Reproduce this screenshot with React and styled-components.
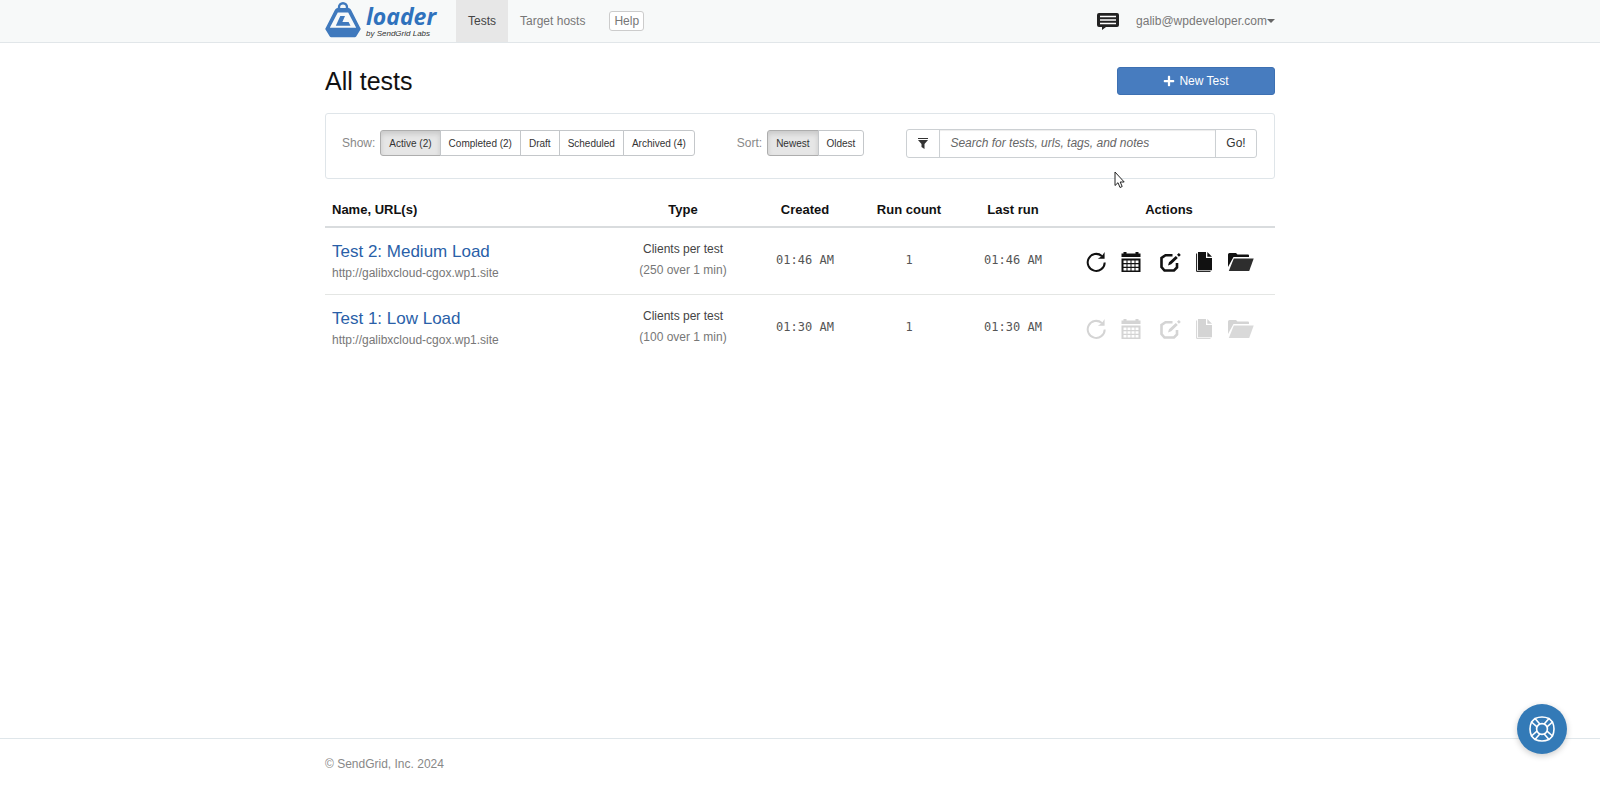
import styled, { createGlobalStyle, css } from 'styled-components';
import { FaPlus } from 'react-icons/fa';

const GlobalStyle = createGlobalStyle`
  * {
    box-sizing: border-box;
  }

  body {
    margin: 0;
    background: #fff;
    color: #333;
    font-family: 'Liberation Sans', Arial, sans-serif;
    font-size: 12px;
    line-height: 20px;
  }

  a {
    color: inherit;
    text-decoration: none;
  }

  button,
  input {
    font-family: inherit;
  }
`;

const Page = styled.div`
  display: flex;
  flex-direction: column;
  min-height: 100vh;
`;

const Container = styled.div`
  width: 100%;
  max-width: 950px;
  margin: 0 auto;
`;

const Navbar = styled.header`
  background: #f7f9f9;
  border-bottom: 1px solid #e1e6e9;
`;

const NavInner = styled(Container)`
  display: flex;
  align-items: stretch;
  height: 42px;
`;

const Logo = styled.a`
  display: flex;
  gap: 5px;
  width: 131px;
  padding-top: 2px;

  svg {
    flex: none;
  }
`;

const LogoText = styled.span`
  display: flex;
  flex-direction: column;
  white-space: nowrap;
`;

const LogoName = styled.span`
  color: #2f72bd;
  font-family: 'Open Sans', sans-serif;
  font-size: 23px;
  font-style: italic;
  font-weight: 700;
  line-height: 28px;
`;

const LogoBy = styled.span`
  color: #333;
  font-size: 8px;
  font-style: italic;
  line-height: 8px;
`;

const NavLinks = styled.nav`
  display: flex;
  align-items: stretch;
`;

const NavLink = styled.a`
  display: flex;
  align-items: center;
  padding: 0 12px;
  color: ${({ $active }) => ($active ? '#444' : '#777')};
  background: ${({ $active }) => ($active ? '#e7e7e7' : 'transparent')};
`;

const HelpButton = styled.button`
  align-self: center;
  height: 20px;
  margin-left: 12px;
  padding: 0 4px;
  border: 1px solid #ccc;
  border-radius: 3px;
  background: #fff;
  color: #777;
  font-size: 12px;
`;

const NavRight = styled.div`
  display: flex;
  align-items: center;
  gap: 17px;
  margin-left: auto;
  color: #777;
`;

const IconButton = styled.button`
  display: flex;
  padding: 0;
  border: 0;
  background: none;
  color: #222;
`;

const UserMenu = styled.button`
  display: flex;
  align-items: center;
  padding: 0;
  border: 0;
  background: none;
  color: #777;
  font-size: 12px;

  &::after {
    content: '';
    border-top: 4px solid #666;
    border-right: 4px solid transparent;
    border-left: 4px solid transparent;
  }
`;

const Main = styled(Container).attrs({ as: 'main' })`
  flex: 1;
`;

const TitleRow = styled.div`
  display: flex;
  align-items: center;
  justify-content: space-between;
  padding: 24px 0 18px;
`;

const Title = styled.h1`
  margin: 0;
  color: #111;
  font-size: 25px;
  font-weight: 400;
  line-height: 28px;
`;

const NewTestButton = styled.button`
  display: flex;
  align-items: center;
  justify-content: center;
  gap: 4px;
  width: 158px;
  height: 28px;
  border: 1px solid #3d70b2;
  border-radius: 3px;
  background: #477cbf;
  color: #fff;
  font-size: 12px;
`;

const Filters = styled.section`
  position: relative;
  display: flex;
  align-items: center;
  height: 66px;
  padding: 0 17px 6px 16px;
  border: 1px solid #dfe5e9;
  border-radius: 3px;
`;

const FilterGroup = styled.div`
  display: flex;
  align-items: center;
  gap: 5px;
  margin-right: 42px;
  color: #888;
`;

const ButtonGroup = styled.div`
  display: flex;
`;

const FilterButton = styled.button`
  height: 26px;
  padding: 0 8px;
  border: 1px solid #c4c7ca;
  background: #fff;
  color: #333;
  font-size: 10px;

  & + & {
    margin-left: -1px;
  }

  &:first-child {
    border-radius: 3px 0 0 3px;
  }

  &:last-child {
    border-radius: 0 3px 3px 0;
  }

  ${({ $active }) =>
    $active &&
    css`
      border-color: #adadad;
      background: #e6e6e6;
      box-shadow: inset 0 3px 5px rgba(0, 0, 0, 0.125);
    `}
`;

const SearchForm = styled.form`
  display: flex;
  flex: 1;
  height: 29px;
  border: 1px solid #ccd0d3;
  border-radius: 3px;
`;

const SearchInput = styled.input`
  flex: 1;
  min-width: 0;
  padding: 0 10px;
  border: solid #ccd0d3;
  border-width: 0 1px;
  box-shadow: inset 0 1px 1px rgba(0, 0, 0, 0.075);
  outline: 0;
  color: #555;
  font-size: 12px;

  &::placeholder {
    color: #666;
    font-style: italic;
    opacity: 1;
  }
`;

const SearchButton = styled.button`
  display: flex;
  align-items: center;
  justify-content: center;
  width: ${({ $wide }) => ($wide ? '40px' : '32px')};
  padding: 0;
  border: 0;
  background: none;
  color: #333;
  font-size: 12px;
`;

const Cursor = styled.svg`
  position: absolute;
  right: 149px;
  bottom: -11px;
`;

const Table = styled.table`
  width: 100%;
  margin-top: 15px;
  border-collapse: collapse;
  table-layout: fixed;
  text-align: center;
`;

const Th = styled.th`
  width: ${({ $width }) => $width};
  height: 33px;
  padding: 0 7px;
  border-bottom: 2px solid #d9dcde;
  color: #111;
  font-size: 13px;
  text-align: ${({ $align }) => $align || 'center'};
`;

const Tr = styled.tr`
  & + & {
    border-top: 1px solid #e4e6e4;
  }
`;

const Td = styled.td`
  height: 67px;
  padding: 0 7px 2px;
  text-align: ${({ $align }) => $align || 'center'};
`;

const NameTd = styled(Td)`
  padding-top: 4px;
`;

const MonoTd = styled(Td)`
  color: #555;
  font-family: 'DejaVu Sans Mono', monospace;
`;

const TestName = styled.a`
  display: block;
  color: #2a5fa8;
  font-size: 17px;
  line-height: 22px;
`;

const TestUrl = styled.span`
  color: #777;
`;

const TestType = styled.div`
  color: ${({ $muted }) => ($muted ? '#777' : '#444')};
  line-height: 21px;
`;

const Actions = styled.div`
  display: flex;
  align-items: center;
  gap: 15px;
  padding: 4px 0 0 16px;
`;

const ActionButton = styled(IconButton)`
  color: #111;

  &:nth-child(2) {
    margin-right: 4px;
  }

  &:last-child {
    margin-left: 1px;
  }

  &:disabled {
    color: #d4d4d4;
  }
`;

const Footer = styled.footer`
  border-top: 1px solid #dfe6ea;
  color: #888;

  ${Container} {
    padding: 15px 0 14px;
  }
`;

const SupportButton = styled.button`
  position: fixed;
  right: 33px;
  bottom: 34px;
  display: flex;
  align-items: center;
  justify-content: center;
  width: 50px;
  height: 50px;
  border: 0;
  border-radius: 50%;
  background: #337ab7;
  box-shadow: 0 2px 6px rgba(0, 0, 0, 0.2);
  color: #fff;
`;

const LogoIcon = () => (
  <svg width="36" height="36" viewBox="0 0 36 36" aria-hidden="true">
    <path d="M14 6.500V5.200a4 4 0 0 1 8 0V6.500" fill="none" stroke="#3f79bd" strokeWidth="2.400" />
    <path
      fill="#3f79bd"
      fillRule="evenodd"
      d="M12.500 6h11q1.500 0 2.500 1.800L35.800 27l-4.600 7.400q-.5.800-1.400.8H6.200q-.9 0-1.400-.8L.2 27 10 7.800Q11 6 12.500 6zM12.800 10.500 4.800 25.800h26.400L23.200 10.500z"
    />
    <path fill="#3f79bd" d="M15.300 14h4.700l-2.600 6h6.200l1.900 3.800H10.800z" />
  </svg>
);

const ChatIcon = () => (
  <svg width="22" height="19" viewBox="0 0 22 19">
    <path fill="currentColor" d="M2 1h18q2 0 2 2v10q0 2-2 2H9l-4 3v-3H2q-2 0-2-2V3q0-2 2-2z" />
    <path stroke="#fff" strokeWidth="1.500" d="M3 4.500h16M3 8h16M3 11.500h16" />
  </svg>
);

const FilterIcon = () => (
  <svg width="10" height="11" viewBox="0 0 10 11">
    <path fill="currentColor" d="M0 0h10v1H0zM0 2h10L6.500 6v5l-3-2V6z" />
  </svg>
);

const RefreshIcon = () => (
  <svg width="20" height="20" viewBox="0 0 20 20">
    <path d="M18.700 10.500A8.500 8.500 0 1 1 15.800 4" fill="none" stroke="currentColor" strokeWidth="2" />
    <path fill="currentColor" d="M18.600 0v6.800h-6.800l2.400-1.500 2.600-2.600z" />
  </svg>
);

const CalendarIcon = () => (
  <svg width="20" height="20" viewBox="0 0 20 20">
    <path fill="currentColor" d="M.5 5V1.500h2V0h3v1.500h9V0h3v1.500h2V5z" />
    <path
      fill="currentColor"
      fillRule="evenodd"
      d="M.5 6.500h19V20H.5zM2.500 8.500V11h3V8.500zm4 0V11h3V8.500zm4 0V11h3V8.500zm4 0V11h3V8.500zM2.500 12.200v2.500h3v-2.500zm4 0v2.500h3v-2.500zm4 0v2.500h3v-2.500zm4 0v2.500h3v-2.500zM2.500 16v2.500h3V16zm4 0v2.500h3V16zm4 0v2.500h3V16zm4 0v2.500h3V16z"
    />
  </svg>
);

const EditIcon = () => (
  <svg width="21" height="20" viewBox="0 0 21 20">
    <path
      d="M12.500 3.200H5.500L1.500 6v9l3 3.500H14l3-3V11"
      fill="none"
      stroke="currentColor"
      strokeWidth="2.600"
    />
    <path fill="currentColor" d="M8 13.500l1-3.200L15.800 4l2 2-6.600 6.300zM17 2.800 18.900.900l1.900 2-1.900 1.900z" />
  </svg>
);

const CopyIcon = () => (
  <svg width="16" height="20" viewBox="0 0 16 20">
    <path fill="currentColor" d="M2 0h8v6h6v12.200H2z" />
    <path fill="currentColor" d="M11.300 0 16 4.700h-4.700z" />
    <path d="M.6 1.500v17.900H14.500" fill="none" stroke="currentColor" strokeWidth="1" />
  </svg>
);

const FolderIcon = () => (
  <svg width="26" height="19" viewBox="0 0 26 19">
    <path fill="currentColor" d="M0 15V2.500Q0 1 1.500 1H8l1.500 1.500H20q1 0 1 1V5H5.500z" />
    <path fill="currentColor" fillOpacity=".88" d="M5.800 6.600H25.700L21.200 19H.8z" />
  </svg>
);

const LifebuoyIcon = () => (
  <svg width="26" height="26" viewBox="0 0 26 26" fill="none" stroke="currentColor" strokeWidth="1.600">
    <circle cx="13" cy="13" r="5.400" />
    <path d="M6 2.500Q13-.5 20 2.500L23.500 6Q26.500 13 23.500 20L20 23.500Q13 26.500 6 23.500L2.500 20Q-.5 13 2.500 6z" />
    <path d="M8 10.800 2.500 6M6 2.500 10.800 8M15.200 8 20 2.500M23.500 6 18 10.800M18 15.200 23.500 20M20 23.500 15.200 18M10.800 18 6 23.500M2.500 20 8 15.200" />
  </svg>
);

const statusFilters = ['Active (2)', 'Completed (2)', 'Draft', 'Scheduled', 'Archived (4)'];
const sortOptions = ['Newest', 'Oldest'];

const actions = [
  { label: 'Run again', Icon: RefreshIcon },
  { label: 'Schedule', Icon: CalendarIcon },
  { label: 'Edit', Icon: EditIcon },
  { label: 'Duplicate', Icon: CopyIcon },
  { label: 'Archive', Icon: FolderIcon },
];

const tests = [
  {
    name: 'Test 2: Medium Load',
    url: 'http://galibxcloud-cgox.wp1.site',
    type: 'Clients per test',
    load: '(250 over 1 min)',
    created: '01:46 AM',
    runs: 1,
    lastRun: '01:46 AM',
  },
  {
    name: 'Test 1: Low Load',
    url: 'http://galibxcloud-cgox.wp1.site',
    type: 'Clients per test',
    load: '(100 over 1 min)',
    created: '01:30 AM',
    runs: 1,
    lastRun: '01:30 AM',
    disabled: true,
  },
];

const Header = () => (
  <Navbar>
    <NavInner>
      <Logo href="#">
        <LogoIcon />
        <LogoText>
          <LogoName>loader</LogoName>
          <LogoBy>by SendGrid Labs</LogoBy>
        </LogoText>
      </Logo>
      <NavLinks>
        <NavLink href="#" $active>
          Tests
        </NavLink>
        <NavLink href="#">Target hosts</NavLink>
        <HelpButton>Help</HelpButton>
      </NavLinks>
      <NavRight>
        <IconButton aria-label="Messages">
          <ChatIcon />
        </IconButton>
        <UserMenu>galib@wpdeveloper.com</UserMenu>
      </NavRight>
    </NavInner>
  </Navbar>
);

const FilterBar = () => (
  <Filters>
    <FilterGroup>
      <span>Show:</span>
      <ButtonGroup>
        {statusFilters.map((label, i) => (
          <FilterButton key={label} $active={i === 0}>
            {label}
          </FilterButton>
        ))}
      </ButtonGroup>
    </FilterGroup>
    <FilterGroup>
      <span>Sort:</span>
      <ButtonGroup>
        {sortOptions.map((label, i) => (
          <FilterButton key={label} $active={i === 0}>
            {label}
          </FilterButton>
        ))}
      </ButtonGroup>
    </FilterGroup>
    <SearchForm onSubmit={(e) => e.preventDefault()}>
      <SearchButton type="button" aria-label="Filter">
        <FilterIcon />
      </SearchButton>
      <SearchInput aria-label="Search" placeholder="Search for tests, urls, tags, and notes" />
      <SearchButton $wide>Go!</SearchButton>
    </SearchForm>
    <Cursor width="11" height="18" viewBox="0 0 11 18" aria-hidden="true">
      <path d="M1 1v13.500l3-2.800 2 4.800 2.200-1-2-4.500h4z" fill="#fff" stroke="#222" />
    </Cursor>
  </Filters>
);

const TestsTable = () => (
  <Table>
    <thead>
      <tr>
        <Th $align="left">Name, URL(s)</Th>
        <Th $width="144px">Type</Th>
        <Th $width="100px">Created</Th>
        <Th $width="108px">Run count</Th>
        <Th $width="100px">Last run</Th>
        <Th $width="212px">Actions</Th>
      </tr>
    </thead>
    <tbody>
      {tests.map((test) => (
        <Tr key={test.name}>
          <NameTd $align="left">
            <TestName href="#">{test.name}</TestName>
            <TestUrl>{test.url}</TestUrl>
          </NameTd>
          <Td>
            <TestType>{test.type}</TestType>
            <TestType $muted>{test.load}</TestType>
          </Td>
          <MonoTd>{test.created}</MonoTd>
          <MonoTd>{test.runs}</MonoTd>
          <MonoTd>{test.lastRun}</MonoTd>
          <Td>
            <Actions>
              {actions.map(({ label, Icon }) => (
                <ActionButton key={label} aria-label={label} disabled={test.disabled}>
                  <Icon />
                </ActionButton>
              ))}
            </Actions>
          </Td>
        </Tr>
      ))}
    </tbody>
  </Table>
);

const App = () => {
  return (
    <Page>
      <GlobalStyle />
      <Header />
      <Main>
        <TitleRow>
          <Title>All tests</Title>
          <NewTestButton>
            <FaPlus size={12} />
            New Test
          </NewTestButton>
        </TitleRow>
        <FilterBar />
        <TestsTable />
      </Main>
      <Footer>
        <Container>© SendGrid, Inc. 2024</Container>
      </Footer>
      <SupportButton aria-label="Support">
        <LifebuoyIcon />
      </SupportButton>
    </Page>
  );
};

export default App;
